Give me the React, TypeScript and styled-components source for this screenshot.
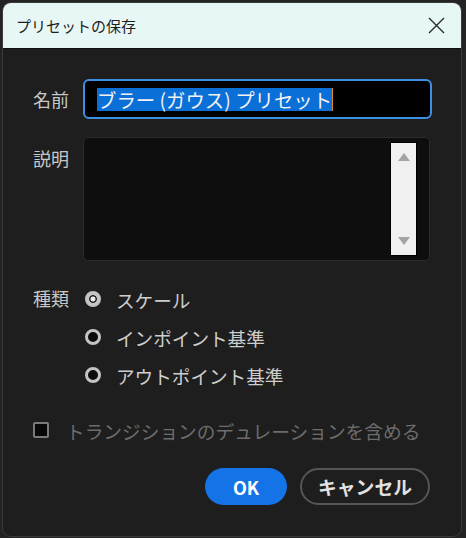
import React from "react";
import styled, { createGlobalStyle } from "styled-components";

const GlobalStyle = createGlobalStyle`
  html, body {
    margin: 0;
    padding: 0;
    background: #232323;
  }
  body {
    font-family: "Noto Sans CJK JP", "Noto Sans", sans-serif;
  }
`;

const Window = styled.div`
  margin: 2px 2px 0 2px;
  width: 460px;
  box-sizing: border-box;
  border: 1px solid #3a3a3a;
  border-radius: 9px;
  overflow: hidden;
  background: #1e1e1e;
`;

const TitleBar = styled.div`
  height: 45px;
  display: flex;
  align-items: center;
  justify-content: space-between;
  padding: 0 14px 0 13px;
  background: #e7f7f5;
  border-bottom: 1px solid #101010;
  color: #1e1e1e;
  font-size: 15px;
`;

const CloseButton = styled.button`
  width: 22px;
  height: 22px;
  padding: 0;
  border: none;
  background: transparent;
  display: flex;
  align-items: center;
  justify-content: center;
`;

const Body = styled.div`
  padding: 30px 29px 31px 30px;
  display: flex;
  flex-direction: column;
`;

const Row = styled.div<{ $top?: number; $align?: string }>`
  display: flex;
  align-items: ${(p) => p.$align || "center"};
  margin-top: ${(p) => p.$top || 0}px;
`;

const Label = styled.div<{ $pad?: number }>`
  width: 50px;
  flex: none;
  color: #c8c8c8;
  font-size: 18px;
  padding-top: ${(p) => p.$pad || 0}px;
`;

const NameField = styled.div`
  flex: 1;
  height: 40px;
  box-sizing: border-box;
  border: 2px solid #3d8fe3;
  border-radius: 6px;
  background: #000;
  display: flex;
  align-items: center;
  padding: 0 12px;
  font-size: 19.4px;
  color: #f2f2f2;
  white-space: pre;
`;

const Selected = styled.span`
  background: #0b6fd8;
  line-height: 23px;
  height: 23px;
  display: inline-block;
`;

const Caret = styled.span`
  display: inline-block;
  width: 1px;
  height: 23px;
  background: #e08a2c;
`;

const TextArea = styled.div`
  flex: 1;
  margin-right: 2px;
  height: 124px;
  box-sizing: border-box;
  border: 1px solid #2c2c2c;
  border-radius: 5px;
  background: #0e0e0e;
  display: flex;
  justify-content: flex-end;
  padding: 4px 12px 4px 0;
`;

const ScrollBar = styled.div`
  width: 27px;
  box-sizing: border-box;
  border: 1px solid #000;
  background: #f0f0f0;
  display: flex;
  flex-direction: column;
  justify-content: space-between;
  align-items: center;
  padding: 10px 0 10px;
`;

const Arrow = styled.div<{ $down?: boolean }>`
  width: 0;
  height: 0;
  border-left: 6px solid transparent;
  border-right: 6px solid transparent;
  ${(p) =>
    p.$down ? "border-top: 8px solid #a3a3a3;" : "border-bottom: 8px solid #a3a3a3;"}
`;

const RadioList = styled.div`
  display: flex;
  flex-direction: column;
`;

const RadioRow = styled.div`
  height: 38px;
  display: flex;
  align-items: center;
  gap: 15px;
  padding-left: 2px;
  color: #cdcdcd;
  font-size: 18.6px;
`;

const RadioDot = styled.span<{ $checked?: boolean }>`
  width: 16px;
  height: 16px;
  box-sizing: border-box;
  border-radius: 50%;
  border: 3px solid #c4c4c4;
  background: ${(p) =>
    p.$checked
      ? "radial-gradient(circle, #ececec 0 2.2px, #2a2a2a 2.8px 3.6px, #c4c4c4 4.2px)"
      : "#0c0c0c"};
`;

const CheckRow = styled.div`
  height: 38px;
  display: flex;
  align-items: center;
  gap: 17px;
  color: #6c6c6c;
  font-size: 18.7px;
`;

const CheckBox = styled.span`
  width: 16px;
  height: 16px;
  box-sizing: border-box;
  border: 2px solid #7a7a7a;
  border-radius: 2px;
  background: #080808;
`;

const Buttons = styled.div`
  display: flex;
  justify-content: flex-end;
  gap: 13px;
  margin-top: 19px;
  padding-right: 2px;
`;

const PillButton = styled.button<{ $primary?: boolean }>`
  height: 37px;
  width: ${(p) => (p.$primary ? 82 : 130)}px;
  border-radius: 19px;
  box-sizing: border-box;
  border: ${(p) => (p.$primary ? "none" : "2px solid #555")};
  background: ${(p) => (p.$primary ? "#1473e6" : "transparent")};
  color: ${(p) => (p.$primary ? "#fff" : "#e2e2e2")};
  font-family: "Noto Sans CJK JP", "Noto Sans", sans-serif;
  font-weight: 700;
  font-size: ${(p) => (p.$primary ? 18 : 18.8)}px;
  padding: 0;
`;

const radios = ["スケール", "インポイント基準", "アウトポイント基準"];

export default function App() {
  return (
    <>
      <GlobalStyle />
      <Window>
        <TitleBar>
          <span>プリセットの保存</span>
          <CloseButton>
            <svg width="17" height="17" viewBox="0 0 17 17">
              <path d="M1 1 L16 16 M16 1 L1 16" stroke="#2a2a2a" strokeWidth="1.4" fill="none" />
            </svg>
          </CloseButton>
        </TitleBar>
        <Body>
          <Row>
            <Label>名前</Label>
            <NameField>
              <Selected>ブラー (ガウス) プリセット</Selected>
              <Caret />
            </NameField>
          </Row>
          <Row $top={18} $align="flex-start">
            <Label $pad={8}>説明</Label>
            <TextArea>
              <ScrollBar>
                <Arrow />
                <Arrow $down />
              </ScrollBar>
            </TextArea>
          </Row>
          <Row $top={19} $align="flex-start">
            <Label $pad={5}>種類</Label>
            <RadioList>
              {radios.map((r, i) => (
                <RadioRow key={r}>
                  <RadioDot $checked={i === 0} />
                  {r}
                </RadioRow>
              ))}
            </RadioList>
          </Row>
          <Row $top={17}>
            <CheckRow>
              <CheckBox />
              トランジションのデュレーションを含める
            </CheckRow>
          </Row>
          <Buttons>
            <PillButton $primary>OK</PillButton>
            <PillButton>キャンセル</PillButton>
          </Buttons>
        </Body>
      </Window>
    </>
  );
}
